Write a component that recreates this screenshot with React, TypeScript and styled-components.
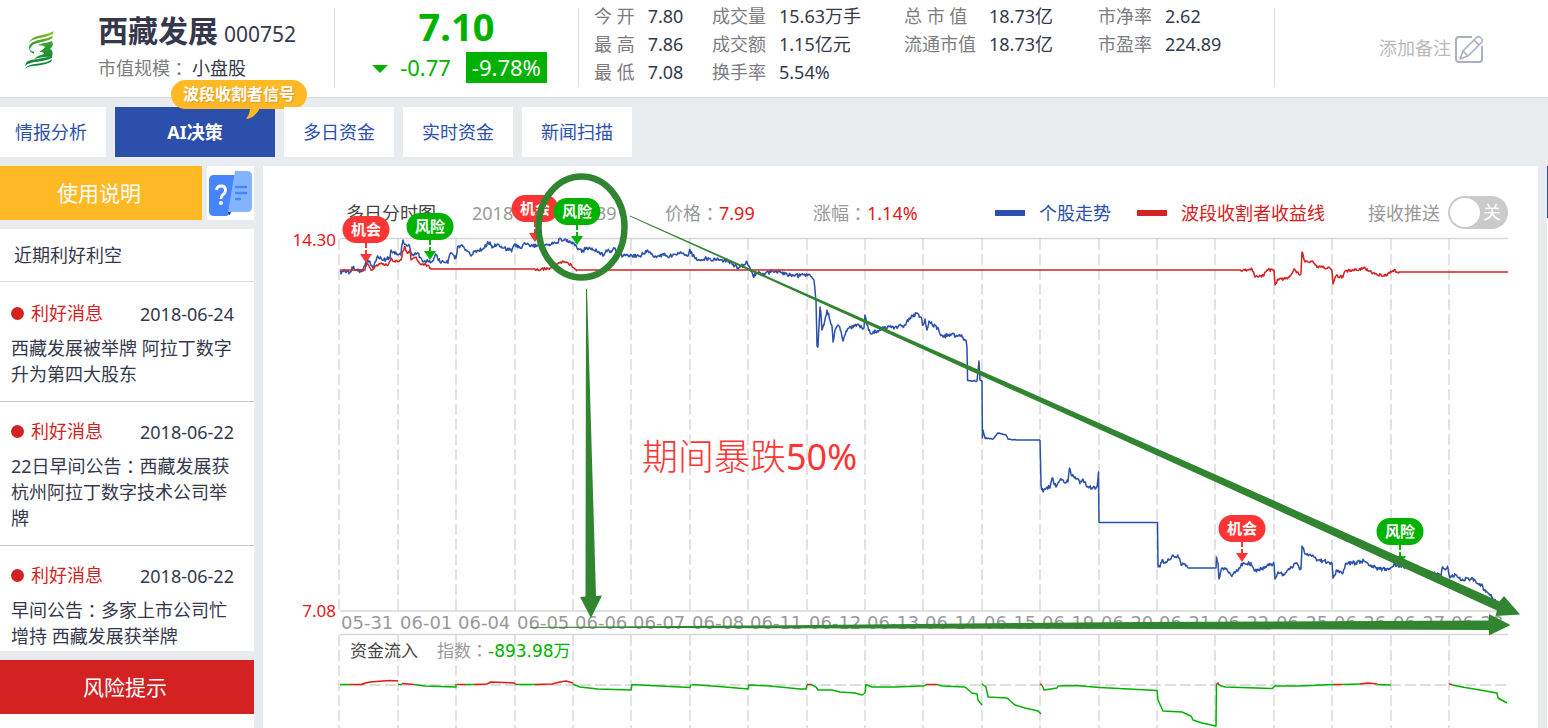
import React from "react";
import styled, { createGlobalStyle } from "styled-components";

const color = {
  page: "#e8ecef",
  ink: "#35384c",
  label: "#7c7c80",
  muted: "#999999",
  line: "#dcdcdc",
  blue: "#2b4fab",
  red: "#d42222",
  green: "#00b200",
  amber: "#ffb925",
  marker: "#318530",
};

const GlobalStyle = createGlobalStyle`
  *, *::before, *::after { box-sizing: border-box; }
  body {
    margin: 0;
    background: ${color.page};
    color: ${color.ink};
    font-family: "Noto Sans", "Noto Sans CJK SC", sans-serif;
    font-size: 18px;
    line-height: 26px;
  }
  button { font: inherit; border: 0; cursor: pointer; }
  a { text-decoration: none; color: inherit; }
  h1, h2, p, dl, dd, dt, ul { margin: 0; padding: 0; font-weight: inherit; }
`;

const Page = styled.div`
  min-height: 100vh;
  display: flex;
  flex-direction: column;
`;

/* ---------- quote header ---------- */

const Header = styled.header`
  display: flex;
  height: 98px;
  padding-top: 8px;
  background: #fff;
  border-bottom: 1px solid ${color.line};
`;

const Block = styled.div<{ $width?: number }>`
  flex: ${(p) => (p.$width ? `0 0 ${p.$width}px` : "1 1 0")};
  height: 79px;
  border-right: 1px solid ${color.line};
  &:last-child { border-right: 0; }
`;

const Company = styled(Block)`
  display: flex;
  padding-left: 22px;
`;

const LogoBox = styled.div`
  width: 76px;
  padding-top: 21px;
`;

const NameRow = styled.div`
  display: flex;
  align-items: baseline;
  gap: 6px;
  height: 44px;
  line-height: 46px;
`;

const Name = styled.h1`
  font-size: 30px;
  font-weight: 700;
`;

const Code = styled.span`
  font-size: 21px;
`;

const Scale = styled.p`
  display: flex;
  line-height: 32px;
  color: ${color.label};
  strong { font-weight: 400; color: ${color.ink}; margin-left: 4px; }
`;

const Colon = styled.span`
  font-family: "Noto Sans CJK TC", sans-serif;
  vertical-align: top;
`;

const Price = styled(Block)`
  display: flex;
  flex-direction: column;
  align-items: center;
  color: ${color.green};
`;

const LastPrice = styled.div`
  font-size: 38px;
  font-weight: 700;
  line-height: 36px;
  height: 44px;
`;

const ChangeRow = styled.div`
  display: flex;
  align-items: center;
  font-size: 22px;
  line-height: 31px;
  padding-left: 6px;
`;

const Down = styled.i`
  border: 8px solid transparent;
  border-top-color: ${color.green};
  border-bottom: 0;
  margin: 3px 12px 0 0;
`;

const Percent = styled.span`
  margin-left: 15px;
  width: 81px;
  text-align: center;
  color: #fff;
  background: ${color.green};
`;

const Stats = styled(Block)`
  display: flex;
  padding-left: 15px;
`;

const StatList = styled.dl<{ $width: number; $label?: number }>`
  width: ${(p) => p.$width}px;
  margin-top: -6px;
  line-height: 28px;
  white-space: nowrap;
  div { display: flex; }
  dt { color: ${color.label}; margin-right: 13px; min-width: ${(p) => p.$label ?? 0}px; }
`;

const Memo = styled(Block)`
  display: flex;
  align-items: center;
  justify-content: flex-end;
  padding-right: 64px;
`;

const MemoButton = styled.button`
  display: flex;
  align-items: center;
  gap: 4px;
  padding: 0;
  background: none;
  color: #b9b9bb;
  svg { margin-top: 3px; }
`;

/* ---------- tabs ---------- */

const Tabs = styled.nav`
  display: flex;
  gap: 9px;
  padding: 9px 0;
`;

const Tab = styled.a<{ $active?: boolean; $width?: number }>`
  position: relative;
  width: ${(p) => p.$width ?? 110}px;
  line-height: 50px;
  text-align: center;
  background: ${(p) => (p.$active ? color.blue : "#fff")};
  color: ${(p) => (p.$active ? "#fff" : color.blue)};
  font-weight: ${(p) => (p.$active ? 700 : 400)};
  &:first-child { padding-right: 4px; }
`;

const Tip = styled.span`
  position: absolute;
  left: 56px;
  top: -27px;
  width: 136px;
  border-radius: 15px;
  background: ${color.amber};
  color: #fff;
  font-size: 16px;
  font-weight: 700;
  line-height: 29px;
  text-shadow: 1px 1px 1px #d9982a;
  svg { position: absolute; left: 74px; top: 28px; }
`;

/* ---------- body ---------- */

const Body = styled.main`
  flex: 1;
  display: grid;
  grid-template-columns: 254px minmax(0, 1fr) 1px;
  column-gap: 9px;
`;

const Side = styled.aside`
  display: flex;
  flex-direction: column;
`;

const GuideRow = styled.div`
  display: flex;
  justify-content: space-between;
  margin-bottom: 9px;
`;

const BigButton = styled.button<{ $tone: string }>`
  flex: 0 0 auto;
  width: ${(p) => (p.$tone === color.amber ? "202px" : "100%")};
  height: 54px;
  padding: 0 6px 0 2px;
  background: ${(p) => p.$tone};
  color: #fff;
  font-size: 21px;
`;

const HelpButton = styled.button`
  width: 47px;
  height: 54px;
  padding: 0;
  background: #fff;
  svg { display: block; }
`;

const News = styled.section`
  margin-bottom: 9px;
  background: #fff;
`;

const NewsTitle = styled.h2`
  padding-left: 14px;
  font-size: 18px;
  line-height: 52px;
  border-bottom: 1px solid ${color.line};
`;

const NewsList = styled.ul`
  && { padding: 2px 0; }
`;

const NewsItem = styled.li`
  list-style: none;
  padding: 16px 16px 14px 11px;
  border-bottom: 1px solid #c9c9c9;
  &:last-child { padding-bottom: 0; border-bottom: 0; }
`;

const NewsHead = styled.div`
  display: flex;
  align-items: center;
  height: 26px;
  margin-bottom: 9px;
  time { padding-top: 2px; }
`;

const Kind = styled.span`
  display: flex;
  align-items: center;
  gap: 7px;
  width: 129px;
  color: ${color.red};
  &::before {
    content: "";
    width: 13px;
    height: 13px;
    border-radius: 50%;
    background: ${color.red};
  }
`;

const Rest = styled.div`
  flex: 1;
  background: #fff;
`;

const Panel = styled.section`
  background: #fff;
`;

const ChartHead = styled.div`
  display: flex;
  align-items: center;
  height: 72px;
  padding: 21px 30px 0 83px;
  white-space: nowrap;
`;

const ChartTitle = styled.h2`
  width: 126px;
  font-size: 18px;
  color: #444;
`;

const Readout = styled.span<{ $width: number }>`
  width: ${(p) => p.$width}px;
  color: ${color.muted};
  b { font-weight: 400; color: #e51717; }
`;

const Legend = styled.span<{ $tone: string }>`
  display: flex;
  align-items: center;
  gap: 14px;
  margin-right: 26px;
  color: ${(p) => p.$tone};
  &::before {
    content: "";
    width: 30px;
    height: 6px;
    background: ${(p) => p.$tone};
  }
`;

const Push = styled.label`
  display: flex;
  align-items: center;
  gap: 8px;
  margin-left: auto;
  color: ${color.muted};
`;

const Switch = styled.span`
  position: relative;
  width: 60px;
  height: 33px;
  border-radius: 17px;
  background: #cacaca;
  color: #fff;
  line-height: 33px;
  padding-left: 35px;
  &::before {
    content: "";
    position: absolute;
    left: 2px;
    top: 2px;
    width: 30px;
    height: 29px;
    border-radius: 50%;
    background: #fff;
  }
  input { position: absolute; inset: 0; width: 100%; height: 100%; margin: 0; opacity: 0; }
`;

const ChartSvg = styled.svg`
  position: relative;
  display: block;
  width: 100%;
  overflow: visible;
  pointer-events: none;
`;

const Strip = styled.div`
  background: linear-gradient(${color.blue} 52px, #fff 52px);
`;

/* ---------- chart data ---------- */

type Pt = [number, number];

const parse = (s: string): Pt[] =>
  s.trim().split(/\s+/).map((p) => p.split(",").map(Number) as Pt);

/* Walks between the sampled minutes and adds tick noise; long flat runs stay flat. */
function ticks(points: Pt[], amp: number, seed: number): string {
  let s = seed;
  const rnd = () => {
    s = (s * 16807) % 2147483647;
    return s / 2147483647 - 0.5;
  };
  const out: string[] = [];
  points.forEach(([x, y], i) => {
    if (i === 0) {
      out.push(`${x},${y}`);
      return;
    }
    const [px, py] = points[i - 1];
    const dx = x - px;
    if (dx <= 20) {
      for (let t = 0.8; t < dx; t += 0.8) {
        const yy = py + ((y - py) * t) / dx + rnd() * 2 * amp;
        out.push(`${(px + t).toFixed(1)},${yy.toFixed(1)}`);
      }
    }
    out.push(`${x},${y}`);
  });
  return out.join(" ");
}

const stock = parse(`
340,271 341,274 345,271 350,272 352,267 358,271 363,271 365,265 367,262 369,261 373,268 376,261 378,257
382,260 386,259 390,258 391,250 395,254 401,253 403,240 407,246 409,245 412,255 417,253 420,257 424,261
431,262 434,258 436,255 440,262 448,262 450,254 456,258 458,246 463,246 467,251 471,256 474,251 482,250 487,244
490,242 492,248 495,244 502,248 512,250 515,244 520,248 526,244 537,246 545,245 555,243 561,239 568,242 574,243
577,248 583,251 586,248 592,248 598,252 603,255 606,250 612,251 615,248 617,254 620,251 622,257 628,255 640,256 648,251
655,256 665,255 670,256 678,253 688,256 690,250 693,256 698,260 705,258 715,260 725,260 730,262 738,268
744,265 747,262 750,268 753,276 758,273 765,274 772,271 780,272 790,275 800,276 806,275 810,275 814,280
816,300 817,346 818,346 820,307 821,315 822,330 824,325 827,310 830,320 832,326 833,342 835,330 838,325 841,331 843,341 846,331 849,328
857,325 864,328 865,315 867,325 871,334 880,329 890,327 898,327 905,325 910,318 917,313 921,317 923,325
925,319 927,330 929,321 932,324 937,328 943,337 950,334 957,336 962,337 966,340 967,348 967.6,381`);

const stockLimitDown = parse(`
967.6,381 977,381 979,361 980,380
982,381 982.4,438 983,430 985,438 993,439 998,433 1006,435 1008,439 1016,440 1040,440`);

const stockTail = parse(`
1040,440 1041,485 1043,492 1047,487
1050,488 1052,478 1056,487 1060,480 1068,482 1069.5,468 1072,476 1080,482 1083,479 1087,487 1092,488 1097,487
1098.5,472 1099,522.5 1157.5,522.5 1158,567 1160,567 1162,560 1165,563 1169,560 1173,555 1178,557 1182,565 1184,564 1188,568
1216,568 1216.5,557 1218,563 1219,579 1222,568 1227,570 1232,576 1239,568 1243,563 1251,564 1255,571 1263,568
1268,564 1274,564 1275,579 1278,572 1283,574 1290,569 1295,563 1300,568 1301,568 1302,546 1305,554 1312,556
1318,560 1328,562 1332,563 1333,578 1337,570 1343,573 1346,563 1355,563 1364,561 1370,566 1380,569 1390,569
1394,564 1402,566 1415,570 1425,573 1435,574 1441,576 1442,568 1448,568 1450,578 1455,575 1460,579 1474,579
1479,585 1482,584 1484,590 1487,592 1492,597 1498,603`);

const yieldLine = parse(`
340,270 365,270 366,266 368,264 372,270 376,266 380,264 388,265 391,258 395,262 401,260 403,251 405,247 407,253
410,250 411,260 416,257 420,264 425,264 430,268 431,269 535,269 538,270 550,268 556,264 562,262 570,264 574,268
577,270 1240,270 1241,271 1252,269 1255,277 1263,276 1267,270 1274,270 1275,285 1278,279 1285,279 1290,276
1294,269 1300,275 1301,273 1302,252 1305,262 1312,261 1317,267 1330,268 1332,271 1333,284 1336,276 1343,277
1345,271 1355,270 1364,268 1370,271 1375,274 1385,276 1391,272 1394,270 1399,272 1508,272`);

const inflow = [
  "340,684.5 350,684.5",
  "362,684.5 364,683.5",
  "398,684.5 402,684.5",
  "414,684.5 425,686 456,687 456,684",
  "465,684.5 474,684.5",
  "516,684.5 535,684.5",
  "573,684 580,687 598,689 631,690 632,684.5 650,685.5 690,687.5 691,684.5",
  "692,684.5 725,687 748,689 749,685 770,686 800,689 806,689 807,685",
  "811,684.5 816,687 818,690 832,690 840,692 855,693 862,695 865,693 866,684.5 872,687 895,687 920,686 924,686 926,684.5",
  "937,684.5 942,686 965,687 972,693 977,694 978,700 982,705",
  "982,684 986,687 988,697 1007,698 1015,705 1025,708 1038,711 1041,714",
  "1042,685 1044,690 1057,688 1058,686 1075,685.5 1100,687.5 1157,690.5 1158,700 1163,711 1182,712 1191,716 1193,720 1202,723 1216,726 1216.5,684",
  "1219,685 1225,687 1272,688.5 1275,686 1300,686 1334,684.5",
  "1342,684.5 1360,684",
  "1377,684.5 1391,685",
  "1452,685 1465,687.5 1480,690 1497,693 1498,698 1507,703",
];

const inflowUp = [
  "350,684.5 362,684.5",
  "362,684 370,682 383,681 390,680.5 398,681",
  "402,683.5 414,684.5",
  "457,684.5 465,684.5",
  "474,684.5 487,684 491,682 514,683 516,684.5",
  "535,684.5 552,684 560,682 566,681 573,683",
  "807,684.5 811,684.5",
  "926,684.5 937,684.5",
  "1040,684 1042,685",
  "1216.5,684 1218,683 1219,685",
  "1334,684.5 1342,684.5",
  "1360,684 1368,683 1377,684",
  "1449,684 1452,684.5",
];

const days = [
  "05-31", "06-01", "06-04", "06-05", "06-06", "06-07", "06-08", "06-11", "06-12", "06-13",
  "06-14", "06-15", "06-19", "06-20", "06-21", "06-22", "06-25", "06-26", "06-27", "06-28",
];

const dayX = (i: number) => Math.round(339.4 + 58.4 * i);

const tickFont = '"DejaVu Sans", "Noto Sans CJK SC", sans-serif';

function Pin({ x, y, kind }: { x: number; y: number; kind: "buy" | "risk" }) {
  const fill = kind === "buy" ? "#ff3434" : color.green;
  return (
    <g fill={fill}>
      <rect x={x - 23.5} y={y - 47} width={47} height={27} rx={13.5} />
      <path d={`M${x} ${y - 20}v12`} stroke={fill} strokeWidth={2} strokeDasharray="5 2" />
      <path d={`M${x - 6} ${y - 9}h12l-6 9z`} />
      <text x={x} y={y - 28} fill="#fff" fontSize={15} fontWeight={700} textAnchor="middle">
        {kind === "buy" ? "机会" : "风险"}
      </text>
    </g>
  );
}

function Chart() {
  return (
    <ChartSvg viewBox="263 238 1275 490" role="img" aria-label="多日分时图">
      <g stroke="#e2e2e2" strokeWidth={2} strokeDasharray="11 4">
        {days.map((d, i) => (
          <React.Fragment key={d}>
            <path d={`M${dayX(i)} 239V611`} />
            <path d={`M${dayX(i)} 635V728`} />
          </React.Fragment>
        ))}
        <path d="M340 685H1508" stroke="#d2d2d2" strokeWidth={1.5} />
      </g>
      <path d="M340 238.5H1508M340 611H1508M340 634.5H1508" stroke="#d6d6d6" strokeWidth={1.5} />

      <g fill="#e51717" fontSize={17} textAnchor="end">
        <text x={336} y={246}>14.30</text>
        <text x={336} y={617}>7.08</text>
      </g>
      <g fill={color.muted} fontSize={18} fontFamily={tickFont}>
        {days.map((d, i) => (
          <text key={d} x={dayX(i) + 2} y={629}>{d}</text>
        ))}
      </g>
      <g fontSize={17} fontFamily={tickFont}>
        <text x={350} y={657} fill="#444">资金流入</text>
        <text x={437} y={657} fill={color.muted}>
          指数<tspan fontFamily="Noto Sans CJK TC">：</tspan>
          <tspan fill={color.green}>-893.98万</tspan>
        </text>
      </g>

      <g fill="none" strokeLinejoin="round" strokeWidth={1.5}>
        <polyline points={ticks(stock, 2, 77)} stroke={color.blue} />
        <polyline points={ticks(stockLimitDown, 0.5, 31)} stroke={color.blue} />
        <polyline points={ticks(stockTail, 2, 53)} stroke={color.blue} />
        <polyline points={ticks(yieldLine, 1.4, 191)} stroke={color.red} />
        {inflow.map((p) => (
          <polyline key={p} points={p} stroke={color.green} />
        ))}
        {inflowUp.map((p) => (
          <polyline key={p} points={p} stroke="#e51717" />
        ))}
      </g>

      <Pin x={366} y={263} kind="buy" />
      <Pin x={430} y={260} kind="risk" />
      <Pin x={535} y={242} kind="buy" />
      <Pin x={1242} y={562} kind="buy" />
      <Pin x={1400} y={565} kind="risk" />

      <g fill={color.marker}>
        <ellipse cx={581.5} cy={227} rx={43} ry={50.5} fill="none" stroke={color.marker} strokeWidth={6.5} />
        <path d="M586 289h1L596 596L602 595.500L591 618L580 597L585.500 596.500Z" />
        <path d="M630 215.500L1220 476.500L1499.500 601.500L1504 596L1520 614.500L1495.500 616L1497 610.500L1220 484L630 216.500Z" />
        <path d="M530 627L750 625.500L1140 622L1489 620.500V614L1510.500 625L1489 635.500V630L1140 629L530 627.800Z" />
      </g>
      <Pin x={577} y={245} kind="risk" />
      <text x={642} y={470} fill="#ff3434" fontSize={36} fontWeight={300}>
        期间暴跌<tspan fontWeight={400}>50%</tspan>
      </text>
    </ChartSvg>
  );
}

/* ---------- drawings ---------- */

const Logo = () => (
  <svg width="36" height="42" viewBox="0 0 36 42" fill="none" aria-hidden="true">
    <defs>
      <linearGradient id="leaf" gradientUnits="userSpaceOnUse" x1="0" y1="2" x2="0" y2="40">
        <stop offset="0" stopColor="#8fbe1e" />
        <stop offset="0.4" stopColor="#2f9a33" />
        <stop offset="1" stopColor="#00803a" />
      </linearGradient>
    </defs>
    <g fill="url(#leaf)">
      <path d="M7 14C9 9 14 7 20 6C25 5 29 4 31.500 2L31 5C27 7 22 8 18 9C13 10 9 11 7 14Z" />
      <path d="M7 18C8 13 13 12 19 10.500C24 9.500 28 8.500 31 6.500L30 9.500C26 12 20 12.500 16 14C12 15 9 16 8 21L12 23V25Q7 23 7 18Z" />
      <path d="M16 16C20 14 25 14 30 12C32 16 30 18 28 20C31 21 31 25 30 28C23 27 18 29 12 30C15 27 19 26 22 25C22 23 19 23 17 23C20 21 22 20 23 18C22 16 19 17 16 16Z" />
      <path d="M4 34C7 30 13 31 18 29.500C23 28.500 27 28 30 26V29C26 31 21 32 17 32.500C12 33 6 34 3 37Z" />
      <path d="M3 40C6 35 12 35.500 17 34.500C22 33.500 27 33 30 30L29 33C25 35 20 36 16 36.500C11 37 6 37 3 40Z" />
    </g>
  </svg>
);

const EditIcon = () => (
  <svg width="29" height="29" viewBox="0 0 29 29" fill="none" stroke="#a9afc4" strokeWidth="2" aria-hidden="true">
    <path d="M17 2H4Q1 2 1 5V24Q1 27 4 27H24Q27 27 27 24V11" />
    <path d="M5 24L8 16L22 2Q24 1 26 3Q28 5 27 7L13 21ZM19 5L24 10M8 16L13 21" strokeWidth="1.600" strokeLinejoin="round" />
  </svg>
);

const HelpIcon = () => (
  <svg width="47" height="54" viewBox="0 0 47 54" aria-hidden="true">
    <path d="M7 9H30L24 46L20 50H7Q2 50 2 45V14Q2 9 7 9Z" fill="#4784ff" />
    <path d="M21 45H24L23 49L21 48Z" fill="#1d4694" />
    <path d="M28 5H40Q45 5 45 10V41Q45 46 40 46H21Z" fill="#84b4ff" />
    <path d="M29 21H39M29 27H39M29 33H33" stroke="#4784ff" strokeWidth="2.500" strokeLinecap="round" />
    <path d="M9.500 24Q10 20 14 20Q18.500 20 18.500 24Q18.500 27 16 28.500Q14 30 14 33" stroke="#fff" strokeWidth="2.800" fill="none" />
    <circle cx="14" cy="37" r="2" fill="#fff" />
  </svg>
);

/* ---------- content ---------- */

const stats: { width: number; label?: number; rows: [string, string][] }[] = [
  { width: 118, rows: [["今 开", "7.80"], ["最 高", "7.86"], ["最 低", "7.08"]] },
  { width: 192, rows: [["成交量", "15.63万手"], ["成交额", "1.15亿元"], ["换手率", "5.54%"]] },
  { width: 194, label: 72, rows: [["总 市 值", "18.73亿"], ["流通市值", "18.73亿"]] },
  { width: 150, rows: [["市净率", "2.62"], ["市盈率", "224.89"]] },
];

const news = [
  { date: "2018-06-24", text: ["西藏发展被举牌 阿拉丁数字升为第四大股东"] },
  { date: "2018-06-22", text: ["22日早间公告", "西藏发展获杭州阿拉丁数字技术公司举牌"] },
  { date: "2018-06-22", text: ["早间公告", "多家上市公司忙增持 西藏发展获举牌"] },
];

export default function App() {
  return (
    <Page>
      <GlobalStyle />
      <Header>
        <Company $width={335}>
          <LogoBox><Logo /></LogoBox>
          <div>
            <NameRow>
              <Name>西藏发展</Name>
              <Code>000752</Code>
            </NameRow>
            <Scale>市值规模<Colon>：</Colon><strong>小盘股</strong></Scale>
          </div>
        </Company>
        <Price $width={244}>
          <LastPrice>7.10</LastPrice>
          <ChangeRow>
            <Down />-0.77<Percent>-9.78%</Percent>
          </ChangeRow>
        </Price>
        <Stats $width={696}>
          {stats.map((col) => (
            <StatList key={col.width} $width={col.width} $label={col.label}>
              {col.rows.map(([k, v]) => (
                <div key={k}><dt>{k}</dt><dd>{v}</dd></div>
              ))}
            </StatList>
          ))}
        </Stats>
        <Memo>
          <MemoButton type="button">添加备注<EditIcon /></MemoButton>
        </Memo>
      </Header>

      <Tabs>
        <Tab href="#info" $width={106}>情报分析</Tab>
        <Tab href="#ai" $active $width={160}>
          AI决策
          <Tip>
            波段收割者信号
            <svg width="16" height="12" viewBox="0 0 16 12" aria-hidden="true">
              <path d="M5 0H15Q10 10 1 11Q5 6 5 0Z" fill={color.amber} />
            </svg>
          </Tip>
        </Tab>
        <Tab href="#days">多日资金</Tab>
        <Tab href="#live">实时资金</Tab>
        <Tab href="#scan">新闻扫描</Tab>
      </Tabs>

      <Body>
        <Side>
          <GuideRow>
            <BigButton type="button" $tone={color.amber}>使用说明</BigButton>
            <HelpButton type="button" aria-label="帮助"><HelpIcon /></HelpButton>
          </GuideRow>
          <News>
            <NewsTitle>近期利好利空</NewsTitle>
            <NewsList>
              {news.map((n) => (
                <NewsItem key={n.text.join()}>
                  <NewsHead><Kind>利好消息</Kind><time>{n.date}</time></NewsHead>
                  <p>
                    {n.text.map((t, i) => (
                      <React.Fragment key={t}>{i > 0 && <Colon>：</Colon>}{t}</React.Fragment>
                    ))}
                  </p>
                </NewsItem>
              ))}
            </NewsList>
          </News>
          <BigButton type="button" $tone={color.red}>风险提示</BigButton>
          <Rest />
        </Side>

        <Panel>
          <ChartHead>
            <ChartTitle>多日分时图</ChartTitle>
            <Readout $width={193}>2018-06-05 14:39</Readout>
            <Readout $width={148}>价格<Colon>：</Colon><b>7.99</b></Readout>
            <Readout $width={182}>涨幅<Colon>：</Colon><b>1.14%</b></Readout>
            <Legend $tone={color.blue}>个股走势</Legend>
            <Legend $tone={color.red}>波段收割者收益线</Legend>
            <Push>
              接收推送
              <Switch><input type="checkbox" />关</Switch>
            </Push>
          </ChartHead>
          <Chart />
        </Panel>
        <Strip />
      </Body>
    </Page>
  );
}
